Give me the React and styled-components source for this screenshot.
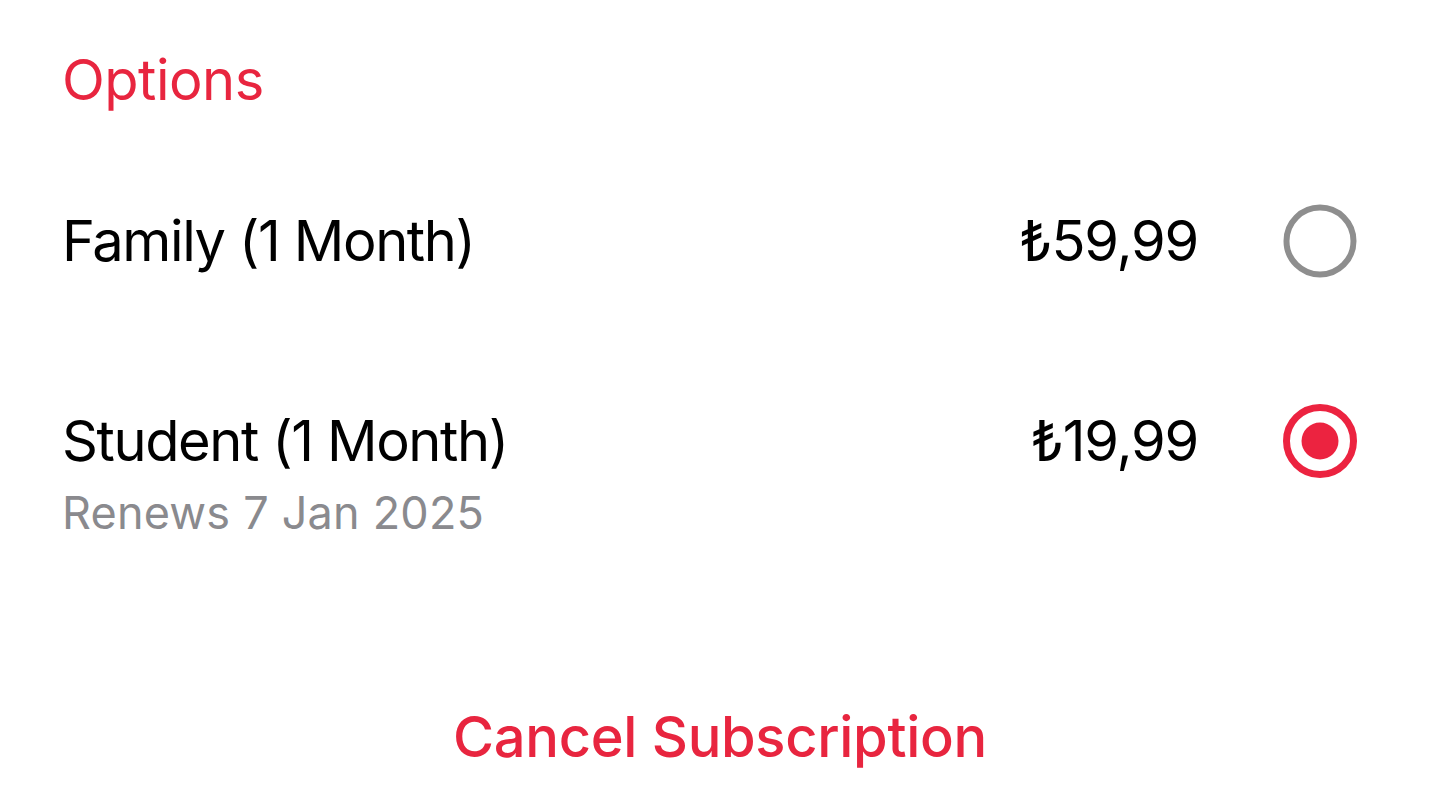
import React from 'react';
import styled, { createGlobalStyle } from 'styled-components';

const GlobalStyle = createGlobalStyle`
  html, body {
    margin: 0;
    padding: 0;
    background: #ffffff;
  }
  body {
    font-family: Inter, "Noto Sans", "Liberation Sans", sans-serif;
    -webkit-font-smoothing: antialiased;
  }
`;

const Page = styled.div`
  width: 1440px;
  height: 785px;
  box-sizing: border-box;
  padding: 46px 83px 0 62px;
  display: flex;
  flex-direction: column;
  overflow: hidden;
`;

const SectionTitle = styled.h2`
  margin: 0;
  font-size: 56px;
  font-weight: 400;
  line-height: 68px;
  color: #e8253f;
  letter-spacing: -0.5px;
`;

const OptionList = styled.div`
  display: flex;
  flex-direction: column;
  margin-top: 90px;
`;

const OptionRow = styled.div`
  display: flex;
  align-items: flex-start;
  height: 200px;
`;

const OptionText = styled.div`
  flex: 1;
  display: flex;
  flex-direction: column;
`;

const OptionName = styled.span`
  font-size: 56px;
  line-height: 74px;
  color: #000000;
  letter-spacing: -1.4px;
`;

const Renewal = styled.span`
  margin-top: -2px;
  font-size: 45px;
  line-height: 74px;
  color: #8a8a8e;
  letter-spacing: 0.2px;
`;

const Price = styled.span`
  font-size: 56px;
  line-height: 74px;
  color: #000000;
  letter-spacing: -1.2px;
  margin-right: 85px;
`;

const Radio = styled.svg`
  width: 74px;
  height: 74px;
  flex-shrink: 0;
`;

const CancelButton = styled.button`
  align-self: center;
  margin-top: 99px;
  margin-right: -21px;
  border: none;
  background: none;
  padding: 0;
  font-family: inherit;
  font-size: 56px;
  font-weight: 500;
  line-height: 68px;
  color: #e8253f;
  letter-spacing: -0.3px;
  cursor: pointer;
`;

const RadioMark = ({ checked }) => (
  <Radio viewBox="0 0 74 74">
    {checked ? (
      <>
        <circle cx="37" cy="37" r="33.5" fill="none" stroke="#ec2340" strokeWidth="7" />
        <circle cx="37" cy="37" r="18.5" fill="#ec2340" />
      </>
    ) : (
      <circle cx="37" cy="37" r="33.5" fill="none" stroke="#8e8e8e" strokeWidth="6" />
    )}
  </Radio>
);

const options = [
  { name: 'Family (1 Month)', price: '₺59,99', checked: false },
  { name: 'Student (1 Month)', price: '₺19,99', renews: 'Renews 7 Jan 2025', checked: true },
];

export default function App() {
  return (
    <>
      <GlobalStyle />
      <Page>
        <SectionTitle>Options</SectionTitle>
        <OptionList>
          {options.map((o) => (
            <OptionRow key={o.name}>
              <OptionText>
                <OptionName>{o.name}</OptionName>
                {o.renews && <Renewal>{o.renews}</Renewal>}
              </OptionText>
              <Price>{o.price}</Price>
              <RadioMark checked={o.checked} />
            </OptionRow>
          ))}
        </OptionList>
        <CancelButton>Cancel Subscription</CancelButton>
      </Page>
    </>
  );
}
